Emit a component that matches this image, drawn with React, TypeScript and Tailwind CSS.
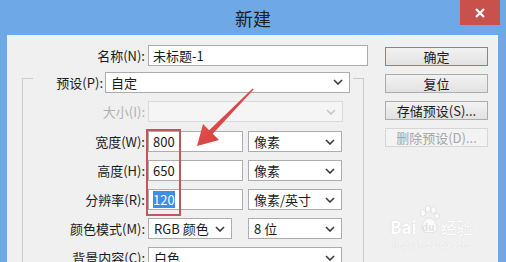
import React from 'react';

const font = "font-['Noto_Sans_CJK_SC','Noto_Sans',sans-serif]";

function Chevron({ disabled }: { disabled?: boolean }) {
  return (
    <svg width="10" height="6" viewBox="0 0 10 6" className="shrink-0">
      <polyline
        points="1,1 5,5 9,1"
        fill="none"
        stroke={disabled ? '#c6c6c6' : '#3a3a3a'}
        strokeWidth="1.6"
      />
    </svg>
  );
}

function Select({ text, className = '', disabled }: { text?: string; className?: string; disabled?: boolean }) {
  return (
    <div
      className={`flex h-[21px] items-center justify-between border pl-[5px] pr-[6px] ${
        disabled ? 'border-[#dadada] bg-[#f5f5f5]' : 'border-[#acacac] bg-white'
      } ${className}`}
    >
      <span className="text-[13px] leading-none text-[#1b1b1b]">{text}</span>
      <Chevron disabled={disabled} />
    </div>
  );
}

function Input({ children, className = '' }: { children: React.ReactNode; className?: string }) {
  return (
    <div className={`flex h-[21px] items-center border border-[#abadb3] bg-white pl-[4px] text-[13px] leading-none text-[#1b1b1b] ${className}`}>
      {children}
    </div>
  );
}

function Row({ label, children, className = '', dim }: { label: string; children: React.ReactNode; className?: string; dim?: boolean }) {
  return (
    <div className={`flex h-[21px] items-center ${className}`}>
      <span className={`w-[122px] text-right text-[13px] leading-none ${dim ? 'text-[#b0b0b0]' : 'text-[#1b1b1b]'}`}>{label}</span>
      <div className="ml-[3px] flex gap-[5px]">{children}</div>
    </div>
  );
}

function Button({ label, primary, disabled }: { label: string; primary?: boolean; disabled?: boolean }) {
  const look = disabled
    ? 'border-[#d6d6d6] bg-[#f3f3f3] text-[#a6a6a6]'
    : primary
      ? 'border-[#5f8fbb] bg-gradient-to-b from-[#f2f2f2] to-[#e2e2e2] text-[#1b1b1b]'
      : 'border-[#acacac] bg-gradient-to-b from-[#f2f2f2] to-[#e2e2e2] text-[#1b1b1b]';
  return (
    <div className={`flex h-[19px] w-[103px] items-center justify-center border text-[13px] leading-none ${look}`}>
      {label}
    </div>
  );
}

export default function App() {
  return (
    <div className={`relative h-[262px] w-[506px] overflow-hidden bg-[#6ea8e6] ${font}`}>
      {/* title bar */}
      <div className="flex h-[35px] items-center justify-center">
        <span className="text-[18px] leading-none text-[#1e1e1e]">新建</span>
      </div>
      <div className="absolute right-[6px] top-0 flex h-[25px] w-[40px] items-center justify-center bg-[#c9514c]">
        <svg width="10" height="10" viewBox="0 0 10 10">
          <path d="M1 1 L9 9 M9 1 L1 9" stroke="#fff" strokeWidth="2.2" />
        </svg>
      </div>

      {/* body */}
      <div className="relative ml-[7px] mr-[8px] flex h-[227px] overflow-hidden bg-[#f0f0f0]">
        <div className="w-[370px] pt-[10px]">
          <div className="flex h-[20px] items-center">
            <span className="w-[138px] text-right text-[13px] leading-none text-[#1b1b1b]">名称(N):</span>
            <Input className="ml-[3px] h-[20px] w-[220px]">未标题-1</Input>
          </div>

          <div className="ml-[15px] mt-[13px] h-[200px] w-[342px] border border-[#cacaca]">
            <div className="-mt-[7px] ml-[10px] flex h-[20px] w-[320px] items-center bg-[#f0f0f0]">
              <span className="w-[70px] text-right text-[13px] leading-none text-[#1b1b1b]">预设(P):</span>
              <Select text="自定" className="ml-[2px] h-[20px] w-[245px]" />
            </div>
            <Row label="大小(I):" className="mt-[9px]" dim>
              <Select className="w-[195px]" disabled />
            </Row>
            <Row label="宽度(W):" className="mt-[9px]">
              <Input className="w-[95px]">800</Input>
              <Select text="像素" className="w-[94px]" />
            </Row>
            <Row label="高度(H):" className="mt-[8px]">
              <Input className="w-[95px]">650</Input>
              <Select text="像素" className="w-[94px]" />
            </Row>
            <Row label="分辨率(R):" className="mt-[8px]">
              <Input className="w-[95px]">
                <span className="bg-[#3d8ee6] py-[2px] text-white">120</span>
              </Input>
              <Select text="像素/英寸" className="w-[94px]" />
            </Row>
            <Row label="颜色模式(M):" className="mt-[8px]">
              <Select text="RGB 颜色" className="w-[84px]" />
              <Select text="8 位" className="ml-[11px] w-[94px]" />
            </Row>
            <Row label="背景内容(C):" className="mt-[8px]">
              <Select text="白色" className="w-[194px]" />
            </Row>
          </div>
        </div>

        <div className="ml-[8px] flex flex-col gap-[8px] pt-[12px]">
          <Button label="确定" primary />
          <Button label="复位" />
          <Button label="存储预设(S)..." />
          <Button label="删除预设(D)..." disabled />
        </div>

        {/* highlight box */}
        <div className="absolute left-[139px] top-[94px] h-[87px] w-[35px] border-2 border-[#c0575a]" />

        {/* watermark */}
        <div className="absolute left-[383px] top-[170px] flex flex-col items-center text-white [text-shadow:0_0_1px_#c8c8c8]">
          <div className="flex items-end">
            <span className="text-[17px] font-bold leading-none">Bai</span>
            <div className="relative mx-[1px] h-[30px] w-[22px]">
              <svg width="22" height="30" viewBox="0 0 22 30" className="absolute left-0 top-0">
                <g fill="#fbfbfb" stroke="#d4d4d4" strokeWidth="0.6">
                  <ellipse cx="5" cy="8" rx="2.6" ry="3.4" />
                  <ellipse cx="10" cy="4" rx="2.6" ry="3.4" />
                  <ellipse cx="15.5" cy="5" rx="2.6" ry="3.4" />
                  <ellipse cx="19" cy="11" rx="2.4" ry="3" />
                  <path d="M4 24 C4 17 8 13 11 13 C15 13 19 18 19 24 C19 29 4 29 4 24 Z" />
                </g>
              </svg>
              <span className="absolute bottom-[3px] left-[4px] text-[10px] font-bold leading-none text-[#e2e2e2] [text-shadow:none]">du</span>
            </div>
            <span className="text-[16px] leading-none">经验</span>
          </div>
          <span className="mt-[6px] text-[8px] leading-none tracking-[0.5px]">jingyan.baidu.com</span>
        </div>
      </div>

      {/* arrow */}
      <svg width="506" height="262" viewBox="0 0 506 262" className="pointer-events-none absolute left-0 top-0">
        <defs>
          <linearGradient id="ar" x1="0" y1="0" x2="1" y2="1">
            <stop offset="0" stopColor="#e86060" />
            <stop offset="1" stopColor="#cf2f2f" />
          </linearGradient>
        </defs>
        <polygon
          points="253.6,89.6 212.8,133.8 219,140 197,146 203,124 209.2,130.2 252.6,88.6"
          fill="url(#ar)"
        />
      </svg>
    </div>
  );
}
